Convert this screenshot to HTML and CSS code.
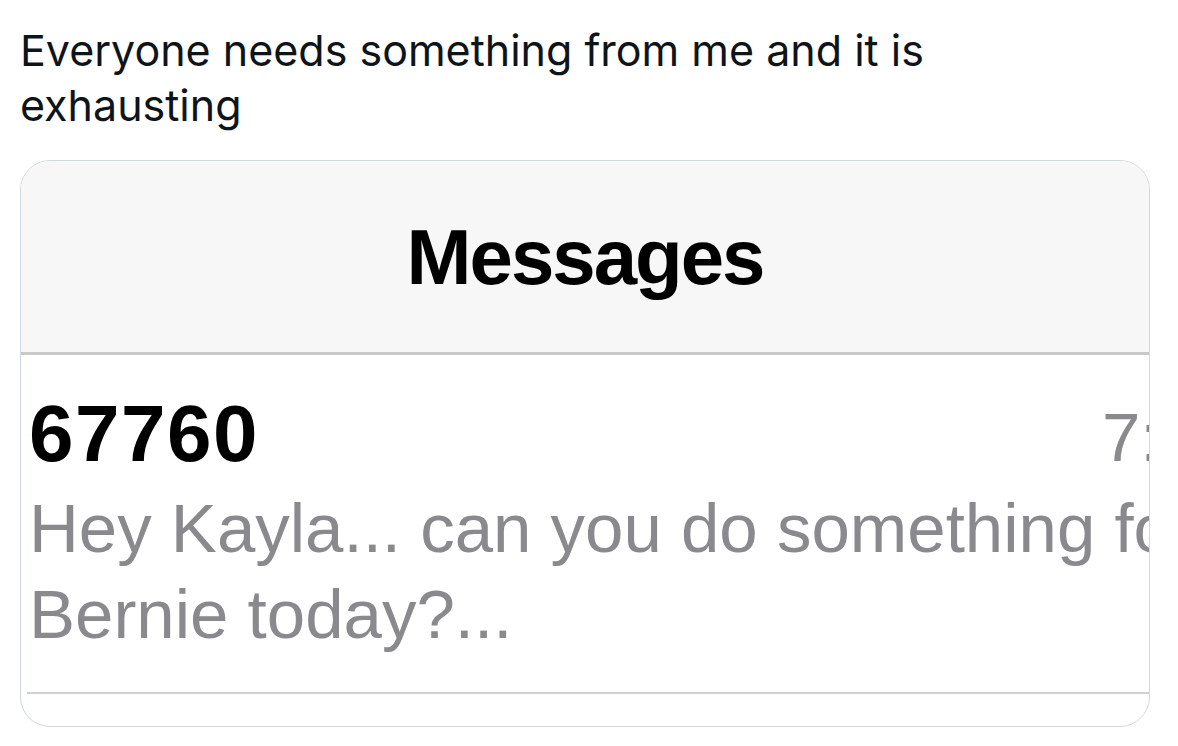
FILE: index.html
```html
<!DOCTYPE html>
<html>
<head>
  <title>Tweet</title>
  <link rel="stylesheet" href="styles.css">
</head>
<body>
  <div class="tweet">
    <p class="tweet-text">Everyone needs something from me and it is<br />exhausting</p>
    <div class="shot">
      <div class="shot-head">
        <h1>Messages</h1>
      </div>
      <div class="thread">
        <div class="thread-top">
          <span class="sender">67760</span>
          <span class="time">7:42 AM</span>
        </div>
        <p class="preview">Hey Kayla... can you do something for<br />Bernie today?...</p>
      </div>
    </div>
  </div>
</body>
</html>
```

FILE: styles.css
```css
body {
  margin: 0;
  background-color: #fff;
}

.tweet {
  padding: 23px 0 0 20px;
}

.tweet-text {
  margin: 0;
  font-family: Inter, "Liberation Sans", sans-serif;
  font-size: 43px;
  line-height: 55px;
  color: #0f1419;
}

.shot {
  box-sizing: border-box;
  width: 1130px;
  height: 567px;
  margin-top: 27px;
  border: 1px solid #cfd9de;
  border-radius: 30px;
  overflow: hidden;
  font-family: "Liberation Sans", Arial, sans-serif;
}

.shot-head {
  display: flex;
  align-items: center;
  justify-content: center;
  height: 191px;
  background-color: #f7f7f7;
  border-bottom: 3px solid #c9c9c9;
}

  .shot-head h1 {
    margin: 0;
    font-size: 78px;
    line-height: 78px;
    letter-spacing: -2px;
    color: #000;
  }

.thread {
  margin-left: 6px;
  padding: 39px 0 34px 2px;
  border-bottom: 2px solid #d0d0d0;
}

.thread-top {
  display: grid;
  grid-template-columns: 1073px auto;
  align-items: baseline;
  white-space: nowrap;
}

.sender {
  font-size: 80px;
  line-height: 80px;
  font-weight: bold;
  letter-spacing: 1.5px;
  color: #000;
}

.time {
  font-size: 69px;
  color: #8a8a8e;
}

.preview {
  margin: 9px 0 0 0;
  font-size: 69px;
  line-height: 86px;
  white-space: nowrap;
  color: #8a8a8e;
}
```
